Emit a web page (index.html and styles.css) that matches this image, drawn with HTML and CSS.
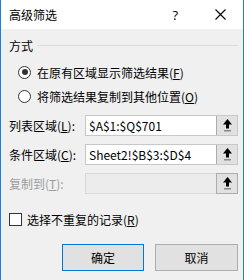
FILE: index.html
```html
<!DOCTYPE html>
<html lang="zh-CN">
<head>
    <meta charset="UTF-8">
    <title>高级筛选</title>
    <link rel="stylesheet" href="styles.css">
</head>
<body>
    <div class="dialog">
        <!-- Заголовок окна -->
        <div class="titlebar">
            <span class="title">高级筛选</span>
            <span class="help">?</span>
            <svg class="close" width="11" height="11" viewBox="0 0 11 11">
                <path d="M0.5 0.5 L10.5 10.5 M10.5 0.5 L0.5 10.5" stroke="#000" stroke-width="1.1" fill="none"/>
            </svg>
        </div>

        <div class="content">
            <!-- Способ -->
            <div class="group-head">
                <span>方式</span>
                <div class="group-line"></div>
            </div>
            <label class="radio-row">
                <span class="radio checked"></span>
                <span>在原有区域显示筛选结果(<u>F</u>)</span>
            </label>
            <label class="radio-row">
                <span class="radio"></span>
                <span>将筛选结果复制到其他位置(<u>O</u>)</span>
            </label>

            <!-- Диапазоны -->
            <div class="ranges">
                <div class="range-row">
                    <span class="range-label">列表区域(<u>L</u>):</span>
                    <div class="ref-box">
                        <span class="ref-text">$A$1:$Q$701</span>
                        <span class="ref-btn"><svg width="9" height="13" viewBox="0 0 9 13"><path d="M4.5 0 L9 5.5 L6 5.5 L6 9.5 L3 9.5 L3 5.5 L0 5.5 Z" fill="#000"/><rect x="1" y="11" width="7" height="1.5" fill="#8a8a8a"/></svg></span>
                    </div>
                </div>
                <div class="range-row">
                    <span class="range-label">条件区域(<u>C</u>):</span>
                    <div class="ref-box">
                        <span class="ref-text">Sheet2!$B$3:$D$4</span>
                        <span class="ref-btn"><svg width="9" height="13" viewBox="0 0 9 13"><path d="M4.5 0 L9 5.5 L6 5.5 L6 9.5 L3 9.5 L3 5.5 L0 5.5 Z" fill="#000"/><rect x="1" y="11" width="7" height="1.5" fill="#8a8a8a"/></svg></span>
                    </div>
                </div>
                <div class="range-row disabled">
                    <span class="range-label">复制到(<u>T</u>):</span>
                    <div class="ref-box">
                        <span class="ref-text"></span>
                        <span class="ref-btn"><svg width="9" height="13" viewBox="0 0 9 13"><path d="M4.5 0 L9 5.5 L6 5.5 L6 9.5 L3 9.5 L3 5.5 L0 5.5 Z" fill="#000"/><rect x="1" y="11" width="7" height="1.5" fill="#8a8a8a"/></svg></span>
                    </div>
                </div>
            </div>

            <label class="check-row">
                <span class="checkbox"></span>
                <span>选择不重复的记录(<u>R</u>)</span>
            </label>

            <div class="buttons">
                <button class="btn default">确定</button>
                <button class="btn">取消</button>
            </div>
        </div>
    </div>
</body>
</html>
```

FILE: styles.css
```css
/* Основа */
body {
    margin: 0;
    font-family: "Noto Sans CJK SC", sans-serif;
    font-size: 12px;
    color: #000;
    background-color: #f0f0f0;
}

.dialog {
    width: 242px;
    height: 280px;
    border-left: 1px solid #1b7fd6;
    border-right: 1px solid #1b7fd6;
    background-color: #f0f0f0;
}

/* Заголовок */
.titlebar {
    height: 29px;
    background-color: #fff;
    display: flex;
    align-items: center;
    padding-left: 8px;
}

.title {
    flex: 1;
    font-size: 12px;
}

.help {
    font-family: "Open Sans", sans-serif;
    font-size: 13px;
    margin-right: 37px;
}

.close {
    margin-right: 17px;
}

/* Содержимое */
.content {
    padding: 0 5px 0 7px;
}

.group-head {
    display: flex;
    align-items: center;
    height: 14px;
    margin-top: 9px;
    padding-left: 1px;
}

.group-line {
    flex: 1;
    height: 1px;
    background-color: #dcdcdc;
    margin: 1px 0 0 4px;
}

.radio-row {
    display: flex;
    align-items: center;
    height: 24px;
    padding-left: 10px;
}

.radio-row:first-of-type {
    margin-top: 8px;
}

.radio {
    width: 11px;
    height: 11px;
    border: 1px solid #333;
    border-radius: 50%;
    background-color: #fff;
    margin-right: 6px;
    display: flex;
    align-items: center;
    justify-content: center;
}

.radio.checked::after {
    content: "";
    width: 6px;
    height: 6px;
    border-radius: 50%;
    background-color: #333;
}

/* Поля диапазонов */
.ranges {
    display: flex;
    flex-direction: column;
    gap: 8px;
    margin-top: 7px;
}

.range-row {
    display: flex;
    align-items: center;
    height: 21px;
}

.range-label {
    width: 76px;
    padding-left: 1px;
}

.ref-box {
    flex: 1;
    display: flex;
    height: 21px;
    border: 1px solid #c8c8c8;
    box-sizing: border-box;
    background-color: #fff;
}

.ref-text {
    flex: 1;
    padding-left: 3px;
    line-height: 19px;
    font-size: 12px;
}

.ref-btn {
    width: 20px;
    background-color: #e1e1e1;
    border-left: 1px solid #adadad;
    display: flex;
    align-items: center;
    justify-content: center;
}

.disabled .range-label {
    color: #9c9c9c;
}

.disabled .ref-box {
    background-color: #ececec;
    border-color: #d9d9d9;
}

.disabled .ref-btn {
    border: 1px solid #adadad;
    margin: -1px -1px -1px 0;
}

/* Флажок */
.check-row {
    display: flex;
    align-items: center;
    height: 19px;
    margin-top: 16px;
    padding-left: 1px;
}

.checkbox {
    width: 11px;
    height: 11px;
    border: 1px solid #333;
    background-color: #fff;
    margin-right: 5px;
}

/* Кнопки */
.buttons {
    display: flex;
    justify-content: flex-end;
    gap: 11px;
    margin-top: 15px;
}

.btn {
    width: 83px;
    height: 27px;
    font-family: inherit;
    font-size: 12px;
    background-color: #e1e1e1;
    border: 1px solid #adadad;
    padding: 0;
    color: #000;
}

.btn.default {
    width: 82px;
    border-color: #0078d7;
}
```
